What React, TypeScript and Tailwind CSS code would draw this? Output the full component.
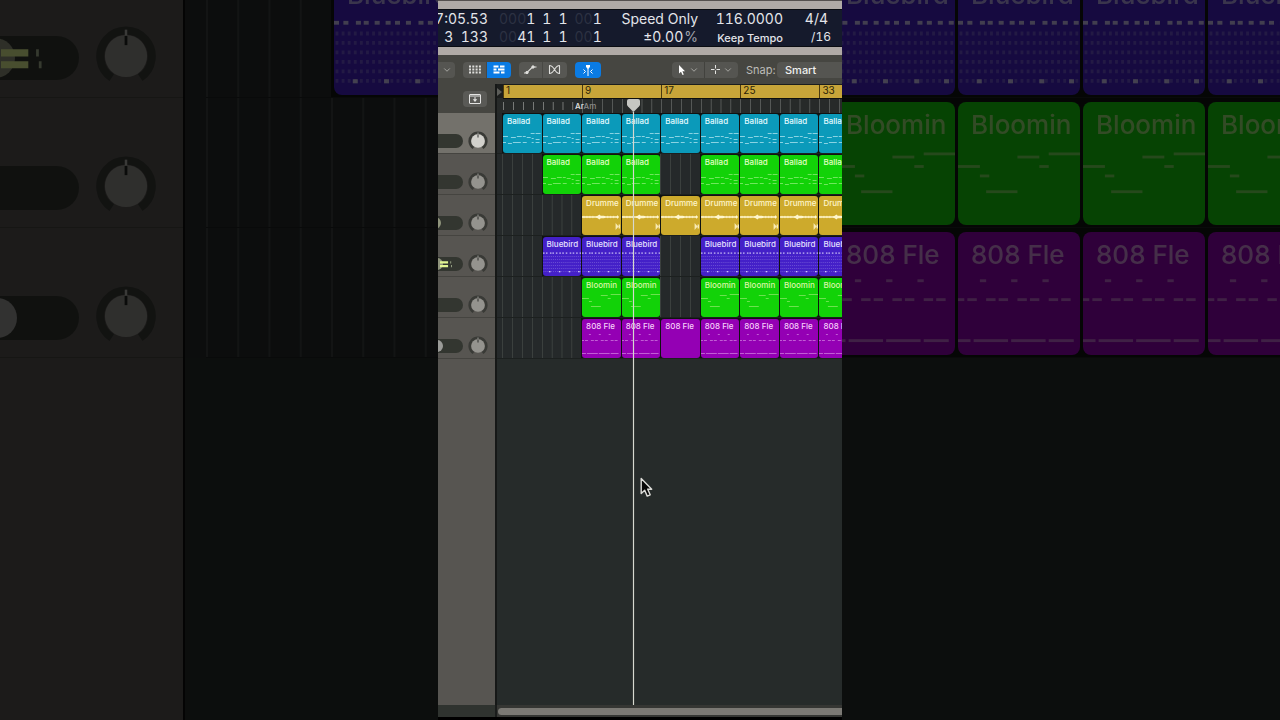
import * as React from "react"
import { clsx } from "clsx"
import { ChevronDown } from "lucide-react"

type Kind = "ballad" | "balladGreen" | "drummer" | "bluebird" | "blooming" | "flex"
type Size = "sm" | "lg"

interface Track {
  kind: Kind
  cells: number[]
  volume: number
  selected?: boolean
  metering?: boolean
}

const TRACKS: Track[] = [
  { kind: "ballad", cells: [1, 1, 1, 1, 1, 1, 1, 1, 1], volume: 30, selected: true },
  { kind: "balladGreen", cells: [0, 1, 1, 1, 0, 1, 1, 1, 1], volume: 30 },
  { kind: "drummer", cells: [0, 0, 1, 1, 1, 1, 1, 1, 1], volume: 68 },
  { kind: "bluebird", cells: [0, 1, 1, 1, 0, 1, 1, 1, 1], volume: 70, metering: true },
  { kind: "blooming", cells: [0, 0, 1, 1, 0, 1, 1, 1, 1], volume: 30 },
  { kind: "flex", cells: [0, 0, 1, 1, 1, 1, 1, 1, 1], volume: 71 },
]

const REGIONS: Record<Kind, { label: string; fill: string; ink: string }> = {
  ballad: { label: "Ballad", fill: "bg-[#0b9aba]", ink: "text-[#e4fbff]" },
  balladGreen: { label: "Ballad", fill: "bg-[#12d208]", ink: "text-[#e2ffc4]" },
  drummer: { label: "Drumme", fill: "bg-[#cdaa2c]", ink: "text-[#fff6cc]" },
  bluebird: { label: "Bluebird", fill: "bg-[#4420c8]", ink: "text-[#e6e0ff]" },
  blooming: { label: "Bloomin", fill: "bg-[#12d208]", ink: "text-[#dcf5a8]" },
  flex: { label: "808 Fle", fill: "bg-[#9400b4]", ink: "text-[#f6d0fa]" },
}

const BALLAD_NOTES = [
  [0, 22, 5], [8, 23, 5], [14, 22, 5], [20, 22, 3], [24, 23, 4], [28, 19, 4], [33, 19, 5],
  [29, 24, 2], [33, 25, 4], [0, 28, 3], [5, 29, 4], [10, 28, 8], [20, 28, 4], [29, 28, 2], [33, 28, 4],
]

// Notes as [x, y, length] on the 39 x 39 face of a region
const NOTES: Record<Kind, number[][]> = {
  ballad: BALLAD_NOTES,
  balladGreen: BALLAD_NOTES,
  drummer: [],
  bluebird: [],
  blooming: [[0, 20, 7], [7, 23, 3], [9, 28, 10], [19, 17, 7], [26, 20, 3], [29, 16, 10]],
  flex: [
    [7, 15, 2], [17, 15, 2], [27, 15, 2], [0, 21, 2], [3, 21, 3], [9, 21, 3], [13, 21, 3], [19, 21, 3],
    [23, 21, 3], [29, 21, 3], [33, 21, 3], [0, 34, 4], [5, 34, 11], [17, 34, 11], [29, 34, 8],
  ],
}

const BEATS = [0, 3, 7, 9.5, 13, 16.5, 19.5, 23, 27, 30, 33.5, 37]

export default function App() {
  return (
    <div className="grid h-screen min-h-[720px] grid-cols-[1fr_404px_1fr] overflow-hidden bg-black font-['Inter',sans-serif]">
      <LeftBackdrop />
      <Workspace />
      <RightBackdrop />
    </div>
  )
}

function Workspace() {
  return (
    <main className="relative flex flex-col overflow-hidden bg-[#464641]">
      <Lcd />
      <Toolbar />
      <div className="flex flex-1">
        <section aria-label="Track headers" className="flex w-[59px] shrink-0 flex-col border-r-2 border-[#161817] bg-[#575551]">
          <div className="flex h-[29px] items-center justify-end bg-[#464641] pr-2">
            <button
              aria-label="Global tracks"
              className="flex h-4 w-6 items-center justify-center rounded-sm bg-[#5a5a56] text-[#e4e4e2]"
            >
              <svg viewBox="0 0 12 10" className="h-[10px] w-3" fill="none" stroke="currentColor">
                <rect x="0.5" y="0.5" width="11" height="9" rx="0.5" />
                <path d="M1 2h10M6 3v3" />
                <path d="M3.8 5.2h4.4L6 8z" fill="currentColor" stroke="none" />
              </svg>
            </button>
          </div>
          {TRACKS.map((track) => (
            <TrackHeader key={track.kind} track={track} size="sm" />
          ))}
        </section>
        <Timeline />
      </div>
      <div className="flex h-[15px] shrink-0 border-b-[3px] border-black">
        <div className="w-[59px] border-r-2 border-[#1a1c1b] bg-[#2f332f]" />
        <div className="flex-1 bg-[#353633] pt-[3px] pl-px">
          <div className="h-[7px] rounded-l-full bg-[#7b7974]" />
        </div>
      </div>
      <svg viewBox="0 0 14 21" className="absolute top-[477px] left-[202px] h-[21px] w-[14px]">
        <path
          d="M1.2 1.6v15l3.5-3.3 2.5 5.8 3-1.3-2.500-5.600h4z"
          fill="#080808"
          stroke="#dcdcd8"
          strokeWidth="1.400"
          strokeLinejoin="round"
        />
      </svg>
    </main>
  )
}

function Lcd() {
  return (
    <div className="flex h-[55px] shrink-0 flex-col bg-[#b0aaa6]">
      <div className="h-[9px] border-t border-[#55504e]" />
      <div className="flex h-[38px] border-y border-[#0a0c12] bg-[#151a2c] text-sm leading-[18px] text-[#e3e5ea] tabular-nums">
        <div className="flex w-[50px] shrink-0 flex-col items-end whitespace-pre">
          <span>7:05.53</span>
          <span>3  133</span>
        </div>
        <div className="ml-[11px] flex flex-col">
          <Position dim="000" bar="1" />
          <Position dim="00" bar="41" />
        </div>
        <div className="flex flex-1 flex-col items-end">
          <span>Speed Only</span>
          <span>
            ±0.00<span className="ml-px text-[#a2a5ae]">%</span>
          </span>
        </div>
        <div className="flex w-[85px] flex-col items-end">
          <span>116.0000</span>
          <span className="pt-px text-[11px] font-medium">Keep Tempo</span>
        </div>
        <div className="mr-[11px] flex w-12 flex-col items-end">
          <span className="pr-[3px]">4/4</span>
          <span className="pt-px text-xs">/16</span>
        </div>
      </div>
    </div>
  )
}

function Position({ dim, bar }: { dim: string; bar: string }) {
  return (
    <div className="flex gap-[7px]">
      <span>
        <span className="text-[#2c3142]">{dim}</span>
        {bar}
      </span>
      <span>1</span>
      <span>1</span>
      <span>
        <span className="text-[#2c3142]">00</span>1
      </span>
    </div>
  )
}

function Toolbar() {
  return (
    <div className="flex h-[29px] shrink-0 items-center gap-2 bg-[#464641] text-[#dededb]">
      <button aria-label="View menu" className="flex h-4 w-[17px] items-center justify-center rounded-r-sm bg-[#555551]">
        <ChevronDown className="size-[10px] text-[#b4b4b0]" />
      </button>
      <div className="flex h-4 overflow-hidden rounded-sm">
        <ToolButton label="Live loops grid">
          <path d="M2 2.500h12M2 5.500h12M2 8.500h12" strokeWidth="1.800" strokeDasharray="2 1.300" />
        </ToolButton>
        <ToolButton label="Tracks view" active>
          <path d="M2.500 2.500h5M9 2.500h4.500M2.500 5.500h3M7 5.500h6.500M2.500 8.500h6M10 8.500h3.500" strokeWidth="2" />
        </ToolButton>
      </div>
      <div className="flex h-4 overflow-hidden rounded-sm">
        <ToolButton label="Automation">
          <path d="M1 9h2.500l6-6h4" strokeWidth="1.200" />
          <circle cx="4" cy="8.500" r="1.200" fill="currentColor" />
          <circle cx="10" cy="3" r="1.200" fill="currentColor" />
        </ToolButton>
        <ToolButton label="Flex">
          <path
            d="M2.500 1.500v8c2.500 0 3.700-1.800 5-4s2.500-4 5-4v8c-2.500 0-3.700-1.800-5-4s-2.500-4-5-4z"
            strokeWidth="1.100"
            strokeLinejoin="round"
          />
        </ToolButton>
      </div>
      <button aria-label="Catch playhead" className="flex h-4 w-[26px] items-center justify-center rounded-sm bg-[#0a7be4] text-white">
        <svg viewBox="0 0 16 12" className="h-3 w-4" fill="none" stroke="currentColor">
          <path d="M6 1h4v2L8 5 6 3z" fill="currentColor" stroke="none" />
          <path d="M8 2v10" />
          <path d="M3.500 5.500l2 2-2 2M12.500 5.500l-2 2 2 2" />
        </svg>
      </button>

      <div className="ml-auto flex items-center">
        <div className="flex h-4 overflow-hidden rounded-sm bg-[#555551]">
          <button aria-label="Pointer tool" className="flex w-[33px] items-center justify-center gap-[3px] border-r border-[#42423e]">
            <svg viewBox="0 0 8 12" className="h-3 w-2 text-white" fill="currentColor">
              <path d="M1 1v8.500l2-1.800 1.500 3.300 1.300-.6-1.400-3.200H7z" />
            </svg>
            <ChevronDown className="size-[10px] text-[#b4b4b0]" />
          </button>
          <button aria-label="Secondary tool" className="flex w-[33px] items-center justify-center gap-[3px]">
            <svg viewBox="0 0 9 9" className="size-[9px]" stroke="#e4e4e2">
              <path d="M4.500 0v3.500M4.500 5.500v3.500M0 4.500h3.500M5.500 4.500H9" />
            </svg>
            <ChevronDown className="size-[10px] text-[#b4b4b0]" />
          </button>
        </div>
        <label htmlFor="snap" className="ml-2 w-[31px] text-[11px] leading-4 text-[#bcbcb8]">
          Snap:
        </label>
        <select
          id="snap"
          className="h-4 w-[65px] appearance-none rounded-l-sm bg-[#555551] pl-2 text-[11px] leading-4 font-medium text-[#f0f0ee]"
        >
          <option>Smart</option>
        </select>
      </div>
    </div>
  )
}

function ToolButton({ label, active, children }: { label: string; active?: boolean; children: React.ReactNode }) {
  return (
    <button
      aria-label={label}
      className={clsx(
        "flex w-6 items-center justify-center border-r border-[#484844] last:border-none",
        active ? "bg-[#0a7be4] text-white" : "bg-[#575753]",
      )}
    >
      <svg viewBox="0 0 16 11" className="h-[11px] w-4" fill="none" stroke="currentColor">
        {children}
      </svg>
    </button>
  )
}

function Timeline() {
  return (
    <section aria-label="Timeline" className="relative min-w-0 flex-1 overflow-hidden bg-[#262b2a]">
      {/* Bar ruler */}
      <div className="flex h-[14px] bg-[#1c1e1d] pt-px">
        <div className="flex w-[6px] shrink-0 items-center">
          <svg viewBox="0 0 5 8" className="h-2 w-[5px]" fill="#5c5d59">
            <path d="M0 0l5 4-5 4z" />
          </svg>
        </div>
        <div className="grid w-[356px] shrink-0 grid-cols-9 bg-[#c8a539]">
          {[1, 9, 17, 25, 33].map((bar) => (
            <span
              key={bar}
              className="col-span-2 border-l border-[#4a3a10] pl-[2px] text-[10px] leading-[11px] text-[#2c2308] last:col-span-1"
            >
              {bar}
            </span>
          ))}
        </div>
      </div>

      {/* Beat ticks and chord names */}
      <div className="flex h-[15px] bg-[#272a29] pl-[6px]">
        <div className="relative grid w-[356px] shrink-0 grid-cols-9 overflow-hidden border-t border-[#0e0f0f]">
          {TRACKS[0].cells.map((_, i) => (
            <div
              key={i}
              className={clsx(
                "bg-[linear-gradient(to_right,currentColor_1px,transparent_1px)] bg-[length:25%_100%]",
                i < 2 ? "my-[3px] text-[#777977]" : "text-[#555856]",
              )}
            />
          ))}
          <span className="absolute top-px left-[72px] text-[8px] leading-[12px] font-medium text-[#e6e6e4]">
            Ar<span className="text-[#8b8d8b]">Am</span>
          </span>
        </div>
      </div>

      {TRACKS.map((track) => (
        <Lane key={track.kind} kind={track.kind} cells={track.cells} size="sm" />
      ))}

      {/* Playhead */}
      <div className="absolute top-[14px] bottom-0 left-[129px] flex w-[15px] flex-col items-center">
        <svg viewBox="0 0 15 14" className="h-[14px] w-[15px] shrink-0">
          <path d="M3 1h9q2 0 2 2v3.500q0 1-1 2L7.500 14 2 8.500q-1-1-1-2V3q0-2 2-2z" fill="#c6c7c2" />
        </svg>
        <div className="w-px flex-1 bg-[#d6d8cf] shadow-[0_0_1px_#c8cabf]" />
      </div>
    </section>
  )
}

function TrackHeader({ track, size }: { track: Track; size: Size }) {
  const sm = size === "sm"

  return (
    <div
      className={clsx(
        "flex shrink-0 justify-end overflow-hidden border-b border-[#454440]",
        track.selected ? "bg-[#73716b]" : "bg-[#575551]",
        sm ? "h-[41px] gap-[5px] pt-[18px] pr-[7px]" : "h-[130px] gap-4 pt-[57px] pr-[26px]",
      )}
    >
      <div className={clsx("relative shrink-0", sm ? "mt-[3px] h-[14px] w-20" : "mt-[11px] h-11 w-[254px]")}>
        <input
          type="range"
          aria-label={`${REGIONS[track.kind].label} volume`}
          defaultValue={track.volume}
          tabIndex={sm ? 0 : -1}
          className={clsx(
            "block size-full appearance-none rounded-full bg-[#333630]",
            "[&::-webkit-slider-thumb]:appearance-none [&::-webkit-slider-thumb]:rounded-full",
            track.kind === "flex"
              ? "[&::-webkit-slider-thumb]:bg-[#9b9b98]"
              : "[&::-webkit-slider-thumb]:bg-[#8f947c]",
            sm ? "[&::-webkit-slider-thumb]:size-3" : "[&::-webkit-slider-thumb]:size-10",
          )}
        />
        {track.metering && (
          <svg
            viewBox="0 0 20 14"
            className={clsx("pointer-events-none absolute top-0 right-0", sm ? "h-[14px] w-[23px]" : "h-11 w-[78px]")}
            preserveAspectRatio="none"
          >
            <path d="M0 4.200h7v2.300H0zM0 8h7v2.300H0z" fill="#e2f592" />
            <path d="M9 4.200h.7v2.300H9zM9.700 8h.7v2.300h-.7z" fill="#a9b494" />
          </svg>
        )}
      </div>
      <svg viewBox="0 0 20 20" className={clsx("shrink-0", sm ? "size-5" : "size-[62px]")} role="img" aria-label="Pan">
        <path d="M5.400 17A8.300 8.300 0 1 1 14.600 17" fill="none" stroke="#393a36" strokeWidth="2.600" />
        <circle cx="10" cy="10" r="6.800" fill={track.selected ? "#d2d1cc" : "#94938e"} />
        <path d="M10 1.500v2" stroke="#b5b5b0" strokeWidth="0.800" />
        <path d="M10 3.500v3" stroke="#20211f" strokeWidth="0.900" />
      </svg>
    </div>
  )
}

function Lane({ kind, cells, size }: { kind: Kind; cells: number[]; size: Size }) {
  const sm = size === "sm"

  return (
    <div className={clsx("overflow-hidden border-b border-[#1c201f] bg-[#25292a]", sm ? "h-[41px] pl-[5px]" : "h-[130px]")}>
      <div className={clsx("grid h-full", sm ? "w-[356px] grid-cols-9" : "w-[500px] grid-cols-4")}>
        {cells.map((filled, i) =>
          filled ? (
            <Region key={i} kind={kind} size={size} empty={kind === "flex" && sm && i === 4} />
          ) : (
            <div
              key={i}
              className={clsx(
                "bg-[length:25%_100%]",
                sm
                  ? "bg-[linear-gradient(to_right,#3b403e_1px,transparent_1px)]"
                  : "bg-[linear-gradient(to_right,#3b403e_2px,transparent_2px)]",
              )}
            />
          ),
        )}
      </div>
    </div>
  )
}

function Region({ kind, size, empty }: { kind: Kind; size: Size; empty?: boolean }) {
  const sm = size === "sm"
  const { label, fill, ink } = REGIONS[kind]

  return (
    <div className={clsx("min-w-0 bg-[#101211]", sm ? "pt-px pl-px" : "pt-1 pb-[2px] pl-[3px]")}>
      <div className={clsx("grid h-full overflow-hidden", fill, ink, sm ? "rounded-[3px]" : "rounded-lg")}>
        <svg viewBox="0 0 39 39" preserveAspectRatio="none" className="col-start-1 row-start-1 size-full" fill="currentColor">
          {!empty && <RegionArt kind={kind} />}
        </svg>
        <span
          className={clsx(
            "col-start-1 row-start-1 min-w-0 overflow-hidden font-medium whitespace-nowrap",
            sm ? "pt-px pl-1 text-[8px] leading-3" : "pt-[5px] pl-[13px] text-[26px] leading-9 opacity-70",
          )}
        >
          {label}
        </span>
      </div>
    </div>
  )
}

function RegionArt({ kind }: { kind: Kind }) {
  if (kind === "bluebird") {
    return (
      <>
        {BEATS.map((x) => (
          <rect key={x} x={x} y="15.500" width="1.600" height="1.200" opacity="0.85" />
        ))}
        {[19.5, 22.5, 25.5, 28.5, 31.5, 34.5].map((y) => (
          <path
            key={y}
            d={`M0.500 ${y}H38.500`}
            stroke="currentColor"
            strokeWidth="1.200"
            strokeDasharray="0.900 1.050"
            opacity="0.25"
          />
        ))}
        {[6, 16, 26, 35.5].map((x) => (
          <rect key={x} x={x} y="34" width="1.600" height="1.300" opacity="0.85" />
        ))}
      </>
    )
  }

  if (kind === "drummer") {
    return (
      <>
        <path d="M0 20.200h14l2-.4 1.500-1.300 1.500 1.300 3-.1 2 .5h11l1-1 1.500 1.800-1.500 1.800-1-1H24l-2 .5-3-.1-1.500 1.300L16 22.200l-2-.4H0z" />
        <path d="M2 19.800v2.400M5 19.800v2.400M8 19.800v2.400M11 19.800v2.400M26 19.800v2.400M29 19.800v2.400M32 19.800v2.400" stroke="currentColor" strokeWidth="0.700" />
        <path d="M34 27l3 3.500-3 3.500zM37 28.500h1.500v4H37z" opacity="0.85" />
      </>
    )
  }

  return (
    <g opacity={kind === "ballad" ? 0.65 : 0.5}>
      {NOTES[kind].map(([x, y, length]) => (
        <rect key={`${x}-${y}`} x={x} y={y} width={length} height="0.900" />
      ))}
    </g>
  )
}

function LeftBackdrop() {
  return (
    <aside aria-hidden="true" className="min-w-0 overflow-hidden bg-[#262b2a] brightness-[0.32]">
      <div className="flex h-full">
        <div className="-mt-8 w-[185px] shrink-0 border-r-2 border-[#0c0d0d] bg-[#575551]">
          {TRACKS.slice(3).map((track) => (
            <TrackHeader key={track.kind} track={track} size="lg" />
          ))}
        </div>
        <div className="-mt-8 min-w-0 flex-1 overflow-hidden">
          {TRACKS.slice(3).map((track) => (
            <div key={track.kind} className="bg-[#25292a] pl-[21px]">
              <Lane kind={track.kind} cells={[0, track.cells[1], 0, 0]} size="lg" />
            </div>
          ))}
        </div>
      </div>
    </aside>
  )
}

function RightBackdrop() {
  return (
    <aside aria-hidden="true" className="min-w-0 overflow-hidden bg-[#262b2a] brightness-[0.32]">
      <div className="-mt-8 -ml-3">
        {TRACKS.slice(3).map((track) => (
          <Lane key={track.kind} kind={track.kind} cells={[1, 1, 1, 1]} size="lg" />
        ))}
      </div>
    </aside>
  )
}
